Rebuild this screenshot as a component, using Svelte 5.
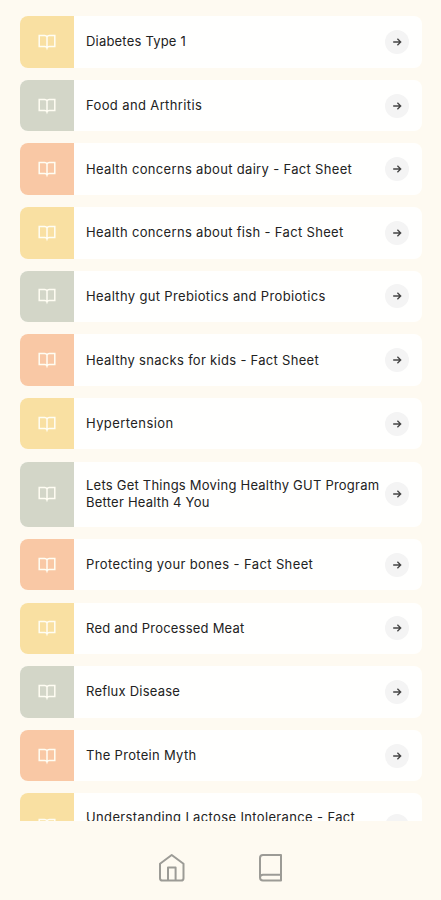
<script>
    const topics = [
        { title: "Diabetes Type 1", color: "yellow", spacing: 0.2 },
        { title: "Food and Arthritis", color: "green", spacing: 0.37 },
        { title: "Health concerns about dairy - Fact Sheet", color: "orange", spacing: 0.33 },
        { title: "Health concerns about fish - Fact Sheet", color: "yellow", spacing: 0.33 },
        { title: "Healthy gut Prebiotics and Probiotics", color: "green", spacing: 0.34 },
        { title: "Healthy snacks for kids - Fact Sheet", color: "orange", spacing: 0.3 },
        { title: "Hypertension", color: "yellow", spacing: 0.42 },
        { title: "Lets Get Things Moving Healthy GUT Program Better Health 4 You", color: "green", spacing: 0.23 },
        { title: "Protecting your bones - Fact Sheet", color: "orange", spacing: 0.38 },
        { title: "Red and Processed Meat", color: "yellow", spacing: 0.22 },
        { title: "Reflux Disease", color: "green", spacing: 0.22 },
        { title: "The Protein Myth", color: "orange", spacing: 0.31 },
        { title: "Understanding Lactose Intolerance - Fact Sheet", color: "yellow", spacing: 0.36 }
    ];
</script>

<div class="screen">
    <main class="list">
        {#each topics as topic}
            <div class="card">
                <div class="thumb {topic.color}">
                    <svg width="18" height="18" viewBox="0 0 18 18">
                        <path d="M9 4C8.6 3 7.8 2.4 6.8 2.4H1.2V13.4H6.9C8 13.4 8.7 14 9 15C9.3 14 10 13.4 11.1 13.4H16.8V2.4H11.2C10.2 2.4 9.4 3 9 4V15" />
                    </svg>
                </div>
                <p class="title" style="letter-spacing: {topic.spacing}px">{topic.title}</p>
                <button class="go" aria-label="Open">
                    <svg width="10" height="10" viewBox="0 0 10 10">
                        <path d="M1.2 5H8.7M5.4 1.8L8.7 5L5.4 8.2" />
                    </svg>
                </button>
            </div>
        {/each}
    </main>
    <nav class="bar">
        <button class="tab" aria-label="Home">
            <svg width="28" height="30" viewBox="0 0 28 30">
                <path d="M3 10.8L14.7 2L26.5 10.8V25.2Q26.5 27.6 24 27.6H5.5Q3 27.6 3 25.2ZM11 27.6V14.6H18.6V27.6" />
            </svg>
        </button>
        <button class="tab" aria-label="Library">
            <svg width="28" height="30" viewBox="0 0 28 30">
                <path d="M25 21.8V2H7Q4 2 4 5V24.6Q4 27.6 7 27.6H25V21.8H7Q4 21.8 4 24.8" />
            </svg>
        </button>
    </nav>
</div>

<style>
    :global(body){
        background-color: #fefaf1;
    }

    .screen{
        height: 900px;
        display: flex;
        flex-direction: column;
        overflow: hidden;
        font-family: Inter, Roboto, sans-serif;
    }

    .list{
        height: 820.5px;
        flex: none;
        box-sizing: border-box;
        padding: 16.2px 19px 0 20px;
        overflow: hidden;
    }

    .card{
        display: flex;
        align-items: center;
        min-height: 51.4px;
        margin-bottom: 12.25px;
        background-color: #fffffe;
        border-radius: 8px;
        overflow: hidden;
    }

    .thumb{
        width: 53.5px;
        flex: none;
        align-self: stretch;
        display: flex;
        align-items: center;
        justify-content: center;
    }

    .thumb svg{
        fill: none;
        stroke: #fffdf3;
        stroke-width: 1.5;
    }

    .yellow{
        background-color: #f9e0a2;
    }

    .green{
        background-color: #d3d6c8;
    }

    .orange{
        background-color: #f9c8a5;
    }

    .title{
        flex: 1;
        margin: 0;
        padding: 15.7px 0 15.7px 12.5px;
        font-size: 13px;
        line-height: 16.8px;
        color: #222;
    }

    .go{
        width: 24px;
        height: 24px;
        flex: none;
        margin-right: 13px;
        padding: 0;
        border: none;
        border-radius: 50%;
        background-color: #f4f4f4;
        display: flex;
        align-items: center;
        justify-content: center;
    }

    .go svg{
        fill: none;
        stroke: #444;
        stroke-width: 1.3;
    }

    .bar{
        flex: 1;
        display: flex;
        justify-content: center;
        gap: 71px;
        padding-top: 32px;
    }

    .tab{
        width: 28px;
        height: 30px;
        padding: 0;
        border: none;
        background: none;
    }

    .tab svg{
        display: block;
        fill: none;
        stroke: #9c9b96;
        stroke-width: 2;
        stroke-linejoin: round;
    }
</style>
